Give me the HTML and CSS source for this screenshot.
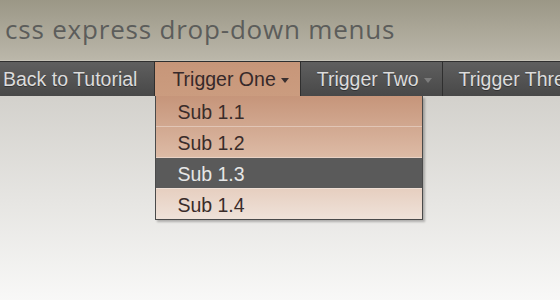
FILE: index.html
```html
<!DOCTYPE html>
<html lang="en">
<head>
    <meta charset="UTF-8">
    <meta name="viewport" content="width=device-width, initial-scale=1.0">
    <title>css express drop-down menus</title>
    <link rel="stylesheet" href="styles.css">
</head>
<body>
    <!-- Page title bar -->
    <header class="masthead">
        <h1>css express drop-down menus</h1>
    </header>

    <!-- Menu bar -->
    <nav class="menu">
        <ul class="menu-list">
            <li class="menu-item first"><a href="#">Back to Tutorial</a></li>
            <li class="menu-item open">
                <a href="#">Trigger One<span class="caret"></span></a>
                <ul class="submenu">
                    <li><a href="#">Sub 1.1</a></li>
                    <li><a href="#">Sub 1.2</a></li>
                    <li class="hover"><a href="#">Sub 1.3</a></li>
                    <li><a href="#">Sub 1.4</a></li>
                </ul>
            </li>
            <li class="menu-item"><a href="#">Trigger Two<span class="caret"></span></a></li>
            <li class="menu-item"><a href="#">Trigger Three<span class="caret"></span></a></li>
        </ul>
    </nav>
</body>
</html>
```

FILE: styles.css
```css
html, body {
    height: 100%;
}

body {
    margin: 0;
    overflow: hidden;
    font-family: "Liberation Sans", Arial, sans-serif;
    background: linear-gradient(to bottom, #d3d1cc 96px, #e6e5e2 200px, #f8f8f7 300px);
}

.masthead {
    height: 60px;
    background: linear-gradient(to bottom, #9b9786, #bbb7aa);
    border-bottom: 1px solid #c6c3b8;
}

.masthead h1 {
    margin: 0;
    padding: 12px 0 0 5px;
    font-family: "Open Sans", "Noto Sans", sans-serif;
    font-weight: normal;
    font-size: 26px;
    line-height: 34px;
    letter-spacing: 0.8px;
    color: #5c5d5b;
}

.menu {
    height: 34px;
    border-top: 1px solid #2f2f2f;
    background: linear-gradient(to bottom, #5f5f5f, #484848);
}

.menu-list {
    display: flex;
    margin: 0;
    padding: 0;
    list-style: none;
}

.menu-item {
    position: relative;
    border-right: 1px solid #2f2f2f;
}

.menu-item > a {
    display: flex;
    align-items: center;
    height: 34px;
    padding: 0 10px 0 16px;
    font-size: 19.5px;
    color: #dcdcdc;
    text-decoration: none;
    text-shadow: 0 1px 0 #333;
    white-space: nowrap;
}

.menu-item.first > a {
    padding: 0 17px 0 3px;
}

.menu-item.open > a {
    padding: 0 11px 0 17px;
    background: linear-gradient(to bottom, #c79679, #cb9c7f);
    color: #36292a;
    text-shadow: none;
}

.caret {
    width: 0;
    height: 0;
    margin: 3px 0 0 5px;
    border-left: 4px solid transparent;
    border-right: 4px solid transparent;
    border-top: 5px solid #7c7c7c;
}

.menu-item.open .caret {
    border-top-color: #3a3030;
}

.submenu {
    position: absolute;
    top: 100%;
    left: 0;
    width: 266px;
    margin: 0;
    padding: 0;
    list-style: none;
    background: linear-gradient(to bottom, #c6957a, #ddbba6 50%, #efe2d9);
    border: 1px solid #4a4a4a;
    border-top: none;
    box-shadow: 2px 2px 2px rgba(0, 0, 0, 0.25);
}

.submenu li {
    border-bottom: 1px solid rgba(255, 255, 255, 0.35);
}

.submenu li:last-child {
    border-bottom: none;
}

.submenu a {
    display: block;
    height: 28px;
    padding: 2px 0 0 21px;
    line-height: 28px;
    font-size: 19.5px;
    color: #3a2c2a;
    text-decoration: none;
}

.submenu li.hover a {
    background-color: #5a5a5a;
    color: #e6e6e6;
}
```
